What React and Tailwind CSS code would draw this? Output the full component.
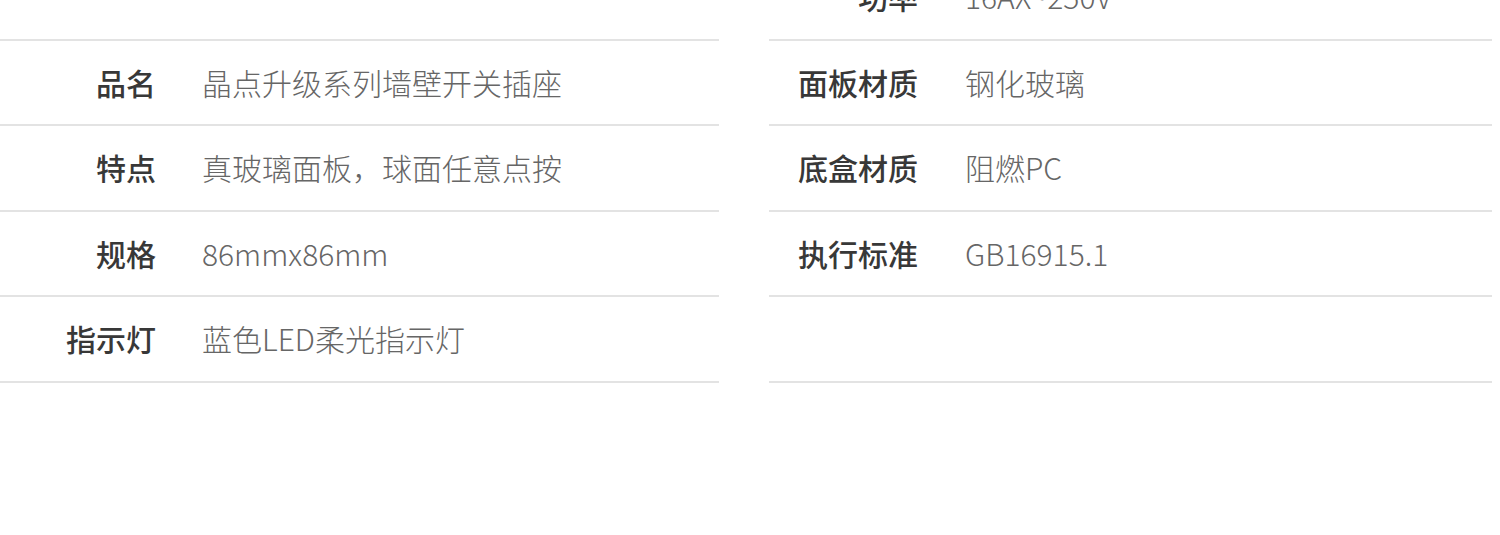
export default function App() {
  const left = [
    ["", ""],
    ["品名", "晶点升级系列墙壁开关插座"],
    ["特点", "真玻璃面板，球面任意点按"],
    ["规格", "86mmx86mm"],
    ["指示灯", "蓝色LED柔光指示灯"],
  ];
  const right = [
    ["功率", "16AX~250V"],
    ["面板材质", "钢化玻璃"],
    ["底盒材质", "阻燃PC"],
    ["执行标准", "GB16915.1"],
    ["", ""],
  ];
  const font = { fontFamily: '"Noto Sans CJK SC", "Noto Sans", sans-serif' };
  return (
    <div className="w-[1500px] h-[535px] bg-white overflow-hidden" style={font}>
      <div className="flex -mt-[45px]">
        <div className="w-[719px] flex flex-col">
          {left.map(([k, v], i) => (
            <div key={i} className="h-[85.5px] flex items-center border-b-2 border-[#e3e3e3]">
              <div className="w-[156px] text-right text-[30px] font-medium text-[#383838]">{k}</div>
              <div className="ml-[46px] text-[30px] font-light text-[#666]">{v}</div>
            </div>
          ))}
        </div>
        <div className="w-[723px] ml-[50px] flex flex-col">
          {right.map(([k, v], i) => (
            <div key={i} className="h-[85.5px] flex items-center border-b-2 border-[#e3e3e3]">
              <div className="w-[149px] text-right text-[30px] font-medium text-[#383838]">{k}</div>
              <div className="ml-[47px] text-[30px] font-light text-[#666]">{v}</div>
            </div>
          ))}
        </div>
      </div>
    </div>
  );
}
